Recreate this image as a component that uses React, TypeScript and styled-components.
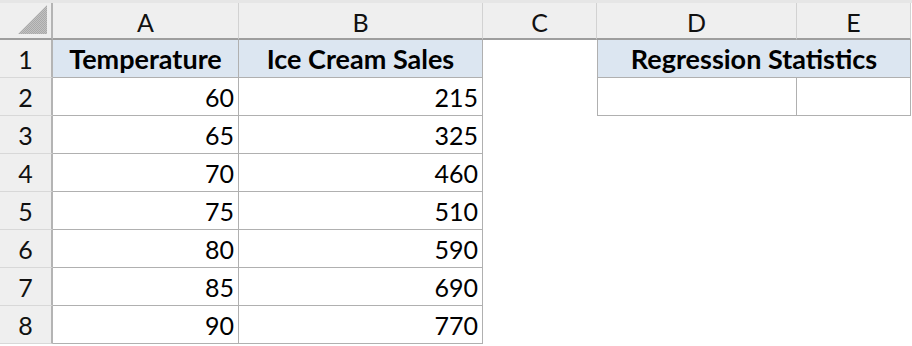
import React from 'react'
import styled, { createGlobalStyle } from 'styled-components'

const Global = createGlobalStyle`
  html, body { margin: 0; padding: 0; background: #ffffff; }
  body { font-family: Lato, "Open Sans", sans-serif; }
`

const Sheet = styled.div`
  width: 912px;
  height: 346px;
  background: #ffffff;
  overflow: hidden;
`

const TopStrip = styled.div`
  height: 3px;
  background: #e6e6e6;
`

const Grid = styled.div`
  display: grid;
  grid-template-columns: 53px 186px 244px 114px 200px 114px 1px;
  grid-template-rows: 37px repeat(8, 38px);
`

const Corner = styled.div`
  position: relative;
  background: #efefef;
  border-right: 2px solid #b4b4b4;
  border-bottom: 2px solid #9e9e9e;
  box-sizing: border-box;
`

const Triangle = styled.div`
  position: absolute;
  right: 4px;
  bottom: 4px;
  width: 29px;
  height: 29px;
  background: repeating-conic-gradient(#a9a9a9 0 25%, #c2c2c2 0 50%) 0 0 / 2px 2px;
  clip-path: polygon(100% 0, 100% 100%, 0 100%);
`

const ColHead = styled.div`
  background: #efefef;
  border-right: 1px solid #d2d2d2;
  border-bottom: 2px solid #9e9e9e;
  box-sizing: border-box;
  display: flex;
  align-items: center;
  justify-content: center;
  font-size: 25px;
  color: #111;
  padding-top: 2px;
`

const RowHead = styled.div`
  background: #efefef;
  border-right: 2px solid #b4b4b4;
  border-bottom: 1px solid #d8d8d8;
  box-sizing: border-box;
  display: flex;
  align-items: center;
  justify-content: center;
  font-size: 25px;
  color: #111;
`

const Cell = styled.div<{ $fill?: boolean; $bold?: boolean; $align?: string; $r?: boolean; $b?: boolean; $l?: boolean; $span?: number }>`
  box-sizing: border-box;
  background: ${p => (p.$fill ? '#dce6f1' : '#ffffff')};
  border-right: ${p => (p.$r ? '1px solid #b0b0b0' : 'none')};
  border-bottom: ${p => (p.$b ? '1px solid #b0b0b0' : 'none')};
  border-left: ${p => (p.$l ? '1px solid #b0b0b0' : 'none')};
  grid-column: span ${p => p.$span || 1};
  display: flex;
  align-items: center;
  justify-content: ${p => (p.$align === 'right' ? 'flex-end' : 'center')};
  padding: 0 4px;
  font-size: ${p => (p.$bold ? '27px' : '25px')};
  font-weight: ${p => (p.$bold ? 700 : 400)};
  color: #000;
  white-space: nowrap;
`

const data = [
  [60, 215],
  [65, 325],
  [70, 460],
  [75, 510],
  [80, 590],
  [85, 690],
  [90, 770],
]

export default function App() {
  return (
    <Sheet>
      <Global />
      <TopStrip />
      <Grid>
        <Corner>
          <Triangle />
        </Corner>
        {['A', 'B', 'C', 'D', 'E'].map(c => (
          <ColHead key={c}>{c}</ColHead>
        ))}
        <div />

        <RowHead>1</RowHead>
        <Cell $fill $bold $r $b>Temperature</Cell>
        <Cell $fill $bold $r $b>Ice Cream Sales</Cell>
        <Cell />
        <Cell $fill $bold $r $b $l $span={2}>Regression Statistics</Cell>
        <div />

        {data.map(([t, s], i) => (
          <React.Fragment key={i}>
            <RowHead>{i + 2}</RowHead>
            <Cell $align="right" $r $b>{t}</Cell>
            <Cell $align="right" $r $b>{s}</Cell>
            <Cell />
            {i === 0 ? (
              <>
                <Cell $r $b $l />
                <Cell $r $b />
              </>
            ) : (
              <>
                <Cell />
                <Cell />
              </>
            )}
            <div />
          </React.Fragment>
        ))}
      </Grid>
    </Sheet>
  )
}
